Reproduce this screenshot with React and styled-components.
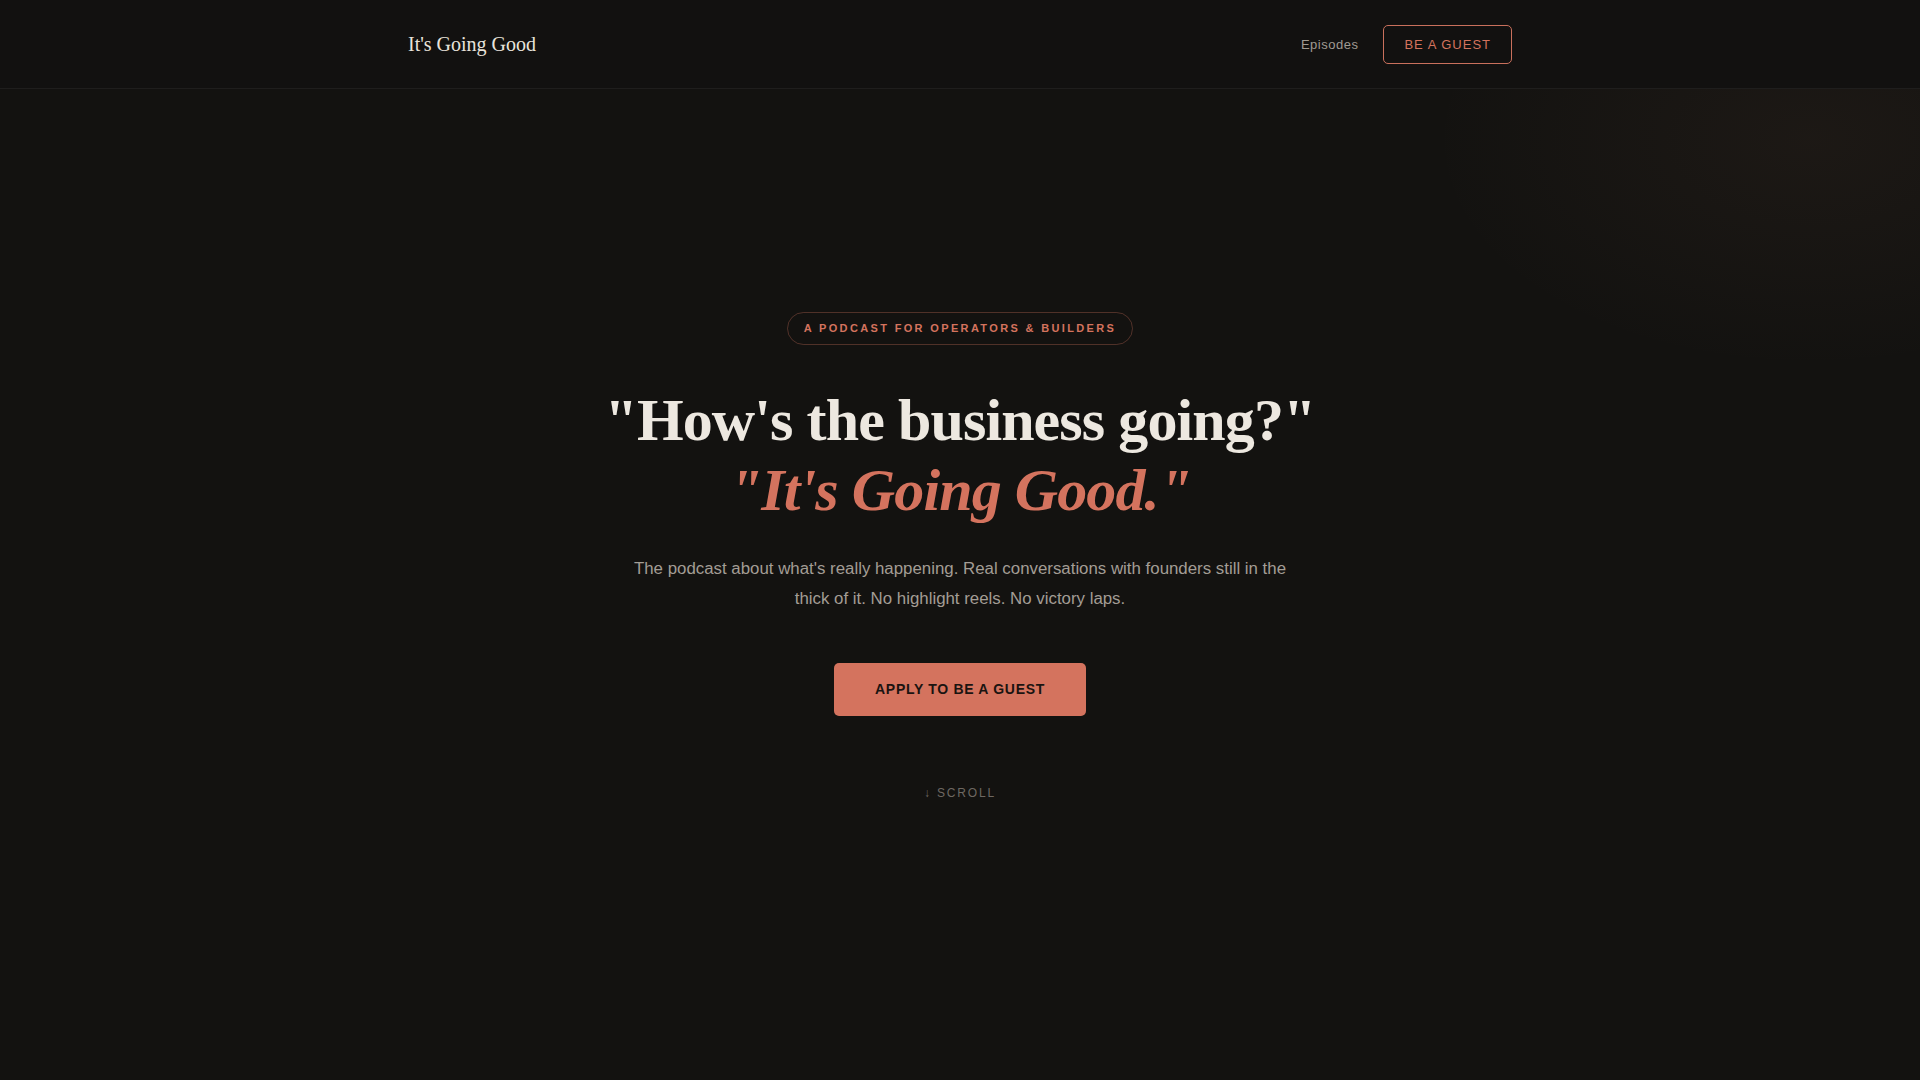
import React from "react";
import styled, { createGlobalStyle } from "styled-components";

const GlobalStyle = createGlobalStyle`
  * { box-sizing: border-box; }
  html, body {
    margin: 0;
    padding: 0;
    background: #131210;
  }
  body {
    font-family: "Liberation Sans", Arial, sans-serif;
    color: #ece7df;
    -webkit-font-smoothing: antialiased;
  }
`;

const Page = styled.div`
  min-height: 100vh;
  display: flex;
  flex-direction: column;
  background: #131210;
`;

const Header = styled.header`
  height: 89px;
  border-bottom: 1px solid rgba(255, 255, 255, 0.055);
  background: #121110;
`;

const HeaderInner = styled.div`
  max-width: 1104px;
  height: 100%;
  margin: 0 auto;
  display: flex;
  align-items: center;
  justify-content: space-between;
`;

const Logo = styled.a`
  font-family: "Liberation Serif", "Times New Roman", serif;
  font-size: 20px;
  color: #e8e3db;
  text-decoration: none;
`;

const Nav = styled.nav`
  display: flex;
  align-items: center;
  gap: 25px;
`;

const NavLink = styled.a`
  font-size: 13px;
  letter-spacing: 0.5px;
  color: #a09a92;
  text-decoration: none;
`;

const OutlineButton = styled.a`
  display: inline-block;
  padding: 11px 20px;
  font-size: 13px;
  line-height: 15px;
  letter-spacing: 1px;
  color: #d4735e;
  border: 1px solid #c9705c;
  border-radius: 5px;
  text-decoration: none;
`;

const Hero = styled.section`
  flex: 1;
  display: flex;
  flex-direction: column;
  align-items: center;
  padding-top: 223px;
  text-align: center;
  background: radial-gradient(
    ellipse 380px 230px at calc(100% - 110px) 50px,
    rgba(196, 138, 108, 0.055),
    rgba(196, 138, 108, 0) 100%
  );
`;

const Badge = styled.span`
  display: inline-block;
  padding: 8px 16px;
  font-size: 11px;
  line-height: 15px;
  font-weight: 700;
  letter-spacing: 2.35px;
  color: #d4735e;
  border: 1px solid rgba(212, 115, 94, 0.32);
  border-radius: 999px;
  margin-bottom: 40px;
`;

const Headline = styled.h1`
  margin: 0;
  font-family: "Liberation Serif", "Times New Roman", serif;
  font-size: 60px;
  line-height: 70px;
  font-weight: 700;
  letter-spacing: -0.015em;
  color: #ede8e0;
`;

const Accent = styled.em`
  display: block;
  font-style: italic;
  color: #d4735e;
`;

const Lead = styled.p`
  margin: 29px 0 0;
  max-width: 680px;
  font-size: 16.85px;
  line-height: 29.5px;
  color: #a39d95;
`;

const PrimaryButton = styled.a`
  display: inline-block;
  margin-top: 50px;
  padding: 18px 41px;
  font-size: 14px;
  line-height: 17px;
  font-weight: 700;
  letter-spacing: 0.7px;
  color: #1a1411;
  background: #d4735e;
  border-radius: 5px;
  text-decoration: none;
`;

const ScrollHint = styled.div`
  margin-top: 68px;
  font-size: 12px;
  line-height: 18px;
  letter-spacing: 1.8px;
  color: #6e6862;
`;

export default function App() {
  return (
    <>
      <GlobalStyle />
      <Page>
        <Header>
          <HeaderInner>
            <Logo href="#">It's Going Good</Logo>
            <Nav>
              <NavLink href="#">Episodes</NavLink>
              <OutlineButton href="#">BE A GUEST</OutlineButton>
            </Nav>
          </HeaderInner>
        </Header>
        <Hero>
          <Badge>A PODCAST FOR OPERATORS &amp; BUILDERS</Badge>
          <Headline>
            "How's the business going?"
            <Accent>"It's Going Good."</Accent>
          </Headline>
          <Lead>
            The podcast about what's really happening. Real conversations with
            founders still in the thick of it. No highlight reels. No victory
            laps.
          </Lead>
          <PrimaryButton href="#">APPLY TO BE A GUEST</PrimaryButton>
          <ScrollHint>↓ SCROLL</ScrollHint>
        </Hero>
      </Page>
    </>
  );
}
